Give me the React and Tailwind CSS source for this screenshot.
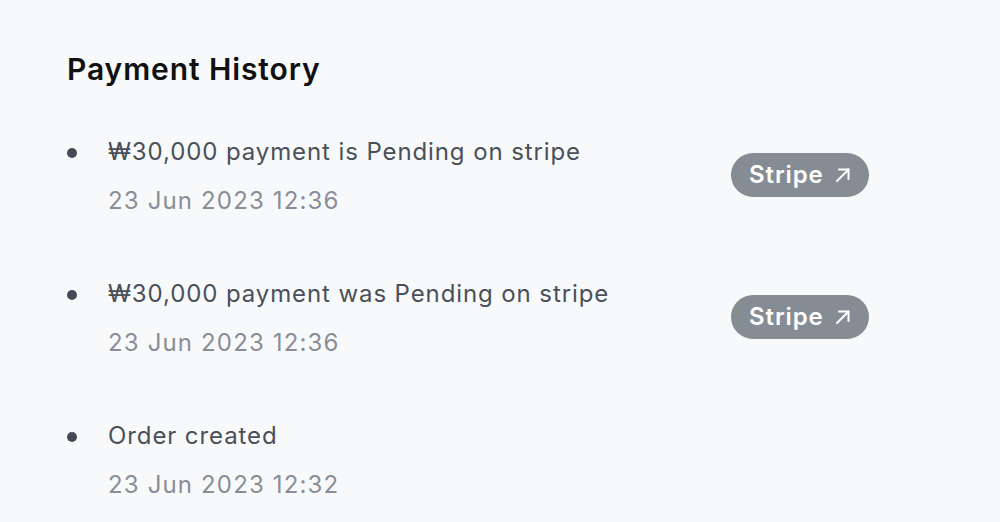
import React from "react";

const items = [
  { text: "₩30,000 payment is Pending on stripe", date: "23 Jun 2023 12:36", stripe: true },
  { text: "₩30,000 payment was Pending on stripe", date: "23 Jun 2023 12:36", stripe: true },
  { text: "Order created", date: "23 Jun 2023 12:32", stripe: false },
];

function Arrow() {
  return (
    <svg width="20" height="20" viewBox="0 0 20 20" fill="none" stroke="white" strokeWidth="2" strokeLinecap="round" strokeLinejoin="round">
      <path d="M4 16 L15.5 4.5" />
      <path d="M6 4.5 H15.5 V14" />
    </svg>
  );
}

export default function App() {
  return (
    <div className="w-[1000px] h-[522px] bg-[#f8f9fb] overflow-hidden" style={{ fontFamily: "Inter, 'Noto Sans', sans-serif" }}>
      <div className="pl-[67px] pt-[51px]">
        <h2 className="text-[30px] leading-[36px] font-semibold text-[#111111] tracking-[0.9px]">Payment History</h2>
        <ul className="mt-[49px] flex flex-col gap-[61px]">
          {items.map((it, i) => (
            <li key={i} className="flex items-center">
              <div className="w-[608px] flex">
                <div className="w-[41px] pt-[12px]">
                  <div className="w-[10px] h-[10px] rounded-full bg-[#454b54]"></div>
                </div>
                <div className="flex flex-col gap-[17px]">
                  <div className="text-[24px] leading-[32px] text-[#4a5059] tracking-[0.9px]">{it.text}</div>
                  <div className="text-[24px] leading-[32px] text-[#888e97] tracking-[1.15px]">{it.date}</div>
                </div>
              </div>
              {it.stripe && (
                <a className="ml-[56px] mb-[3px] flex items-center gap-[9px] h-[44px] pl-[18px] pr-[16px] rounded-full bg-[#868c94] text-white text-[24px] font-semibold tracking-[0.9px]">
                  Stripe
                  <Arrow />
                </a>
              )}
            </li>
          ))}
        </ul>
      </div>
    </div>
  );
}
